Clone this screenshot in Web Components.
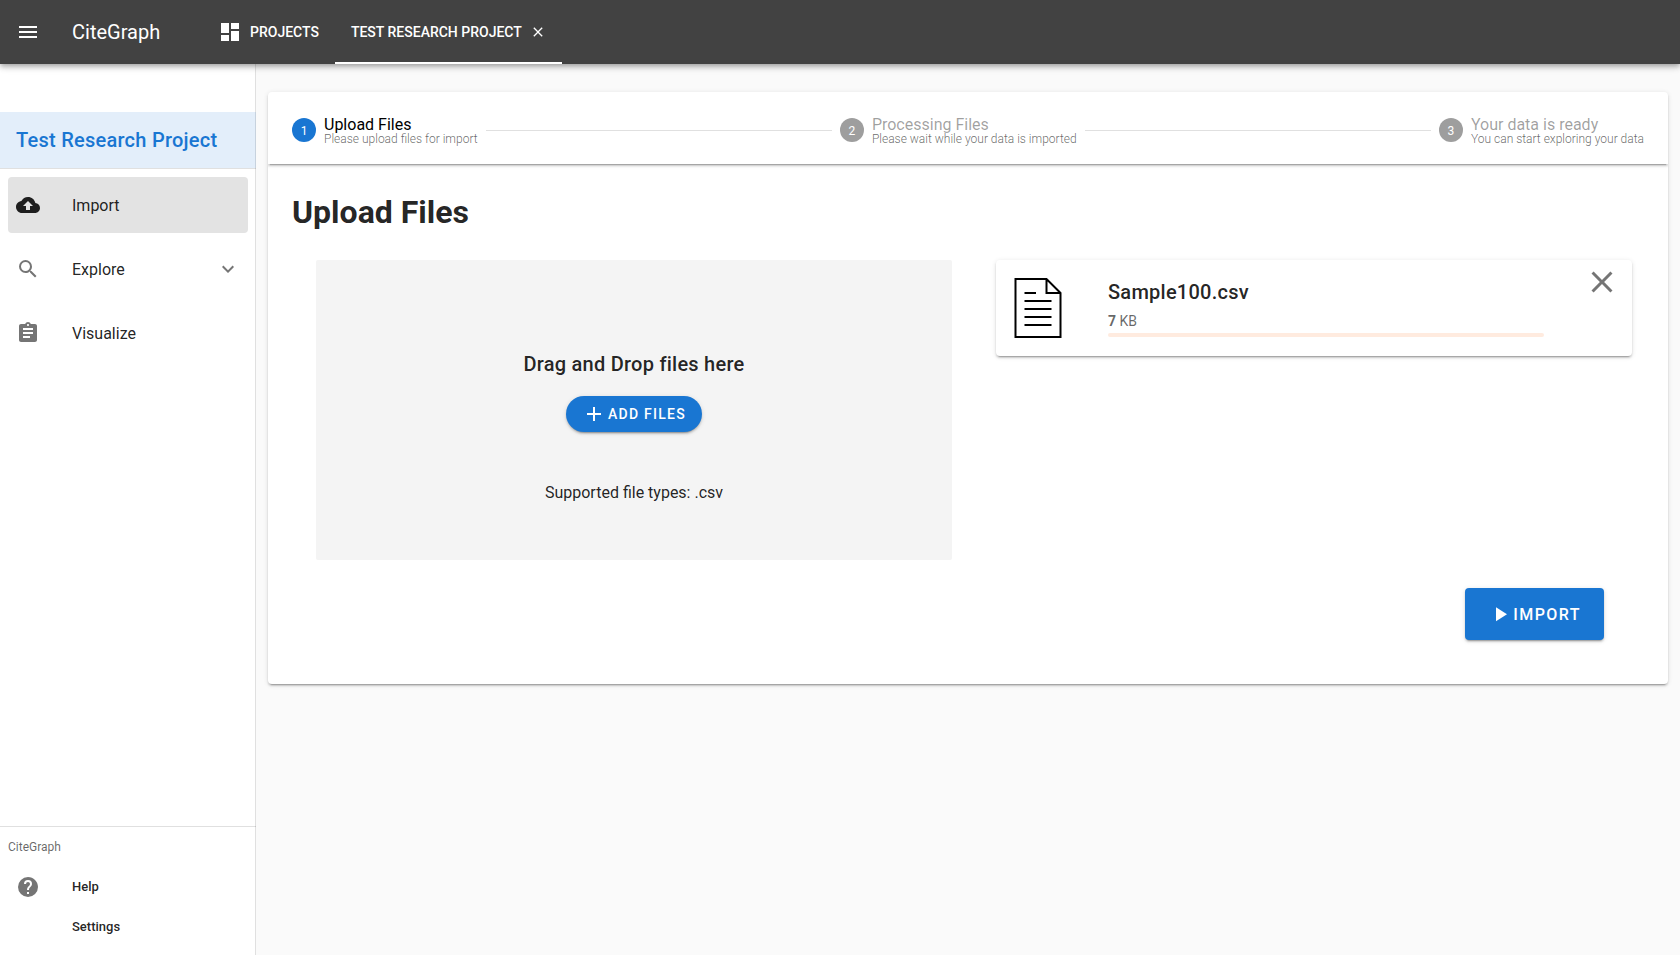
<!DOCTYPE html>
<html lang="en">
<head>
<meta charset="utf-8">
<meta name="viewport" content="width=device-width, initial-scale=1">
<title>CiteGraph</title>
<style>
  body { margin: 0; font-family: Roboto, "Liberation Sans", sans-serif; font-size: 16px; line-height: 24px; color: rgba(0,0,0,.87); background: #fafafa; --primary: #1976d2; --line: rgba(0,0,0,.12);
    --shadow: 0 3px 1px -2px rgba(0,0,0,.2), 0 2px 2px 0 rgba(0,0,0,.14), 0 1px 5px 0 rgba(0,0,0,.12); }
</style>
</head>
<body>
<cg-app>
  <cg-app-bar slot="bar">
    <cg-tab href="#projects" icon="dashboard">Projects</cg-tab>
    <cg-tab href="#project" active closable>Test Research Project</cg-tab>
  </cg-app-bar>
  <cg-sidebar slot="side" heading="Test Research Project">
    <cg-nav-item href="#import" icon="cloud" active>Import</cg-nav-item>
    <cg-nav-item href="#explore" icon="search" expandable>Explore</cg-nav-item>
    <cg-nav-item href="#visualize" icon="clipboard">Visualize</cg-nav-item>
    <cg-nav-item slot="footer" dense href="#help" icon="help">Help</cg-nav-item>
    <cg-nav-item slot="footer" dense href="#settings">Settings</cg-nav-item>
  </cg-sidebar>
  <cg-import-card>
    <cg-step slot="steps" number="1" active>Upload Files<span slot="hint">Please upload files for import</span></cg-step>
    <cg-step slot="steps" number="2">Processing Files<span slot="hint">Please wait while your data is imported</span></cg-step>
    <cg-step slot="steps" number="3" last>Your data is ready<span slot="hint">You can start exploring your data</span></cg-step>
    <cg-dropzone></cg-dropzone>
    <cg-file name="Sample100.csv" size="7"></cg-file>
    <cg-button slot="action" large icon="play">Import</cg-button>
  </cg-import-card>
</cg-app>
<script>
const ICONS = {
  menu: 'M3,6H21V8H3V6M3,11H21V13H3V11M3,16H21V18H3V16Z',
  dashboard: 'M13,3V9H21V3M13,21H21V11H13M3,21H11V15H3M3,13H11V3H3V13Z',
  close: 'M19,6.41L17.59,5L12,10.59L6.41,5L5,6.41L10.59,12L5,17.59L6.41,19L12,13.41L17.59,19L19,17.59L13.41,12L19,6.41Z',
  cloud: 'M19.35 10.04C18.67 6.59 15.64 4 12 4 9.11 4 6.6 5.64 5.35 8.04 2.34 8.36 0 10.91 0 14c0 3.31 2.69 6 6 6h13c2.76 0 5-2.24 5-5 0-2.64-2.05-4.78-4.65-4.96zM14 13v4h-4v-4H7l5-5 5 5h-3z',
  search: 'M9.5,3A6.5,6.5 0 0,1 16,9.5C16,11.11 15.41,12.59 14.44,13.73L14.71,14H15.5L20.5,19L19,20.5L14,15.5V14.71L13.73,14.44C12.59,15.41 11.11,16 9.5,16A6.5,6.5 0 0,1 3,9.5A6.5,6.5 0 0,1 9.5,3M9.5,5C7,5 5,7 5,9.5C5,12 7,14 9.5,14C12,14 14,12 14,9.5C14,7 12,5 9.5,5Z',
  clipboard: 'M19 3h-4.18C14.4 1.84 13.3 1 12 1c-1.3 0-2.4.84-2.82 2H5c-1.1 0-2 .9-2 2v14c0 1.1.9 2 2 2h14c1.1 0 2-.9 2-2V5c0-1.1-.9-2-2-2zm-7 0c.55 0 1 .45 1 1s-.45 1-1 1-1-.45-1-1 .45-1 1-1zm2 14H7v-2h7v2zm3-4H7v-2h10v2zm0-4H7V7h10v2z',
  chevron: 'M7.41,8.58L12,13.17L16.59,8.58L18,10L12,16L6,10L7.41,8.58Z',
  help: 'M15.07,11.25L14.17,12.17C13.45,12.89 13,13.5 13,15H11V14.5C11,13.39 11.45,12.39 12.17,11.67L13.41,10.41C13.78,10.05 14,9.55 14,9C14,7.89 13.1,7 12,7A2,2 0 0,0 10,9H8A4,4 0 0,1 12,5A4,4 0 0,1 16,9C16,9.88 15.64,10.67 15.07,11.25M13,19H11V17H13M12,2A10,10 0 0,0 2,12A10,10 0 0,0 12,22A10,10 0 0,0 22,12C22,6.47 17.5,2 12,2Z',
  plus: 'M19,13H13V19H11V13H5V11H11V5H13V11H19V13Z',
  play: 'M8,5.14V19.14L19,12.14L8,5.14Z'
};

class Base extends HTMLElement {
  connectedCallback() {
    if (this.shadowRoot) return;
    this.attachShadow({ mode: 'open' }).innerHTML = this.render();
  }
}
const define = (name, render) => customElements.define(name, class extends Base { render() { return render(this); } });
const icon = name => `<cg-icon name="${name}"></cg-icon>`;

define('cg-icon', el => `
  <style>
    :host { display: block; flex: none; width: 24px; height: 24px; }
    svg { display: block; width: 100%; height: 100%; fill: currentColor; }
  </style>
  <svg viewBox="0 0 24 24" aria-hidden="true"><path d="${ICONS[el.getAttribute('name')]}"/></svg>`);

define('cg-app', () => `
  <style>
    :host { display: flex; flex-direction: column; min-height: 100vh; }
    .body { flex: 1; display: grid; grid-template-columns: 256px minmax(0, 1fr); }
    main { padding: 28px 12px; }
  </style>
  <slot name="bar"></slot>
  <div class="body"><slot name="side"></slot><main><slot></slot></main></div>`);

define('cg-app-bar', () => `
  <style>
    :host { display: block; position: relative; z-index: 1; }
    header { display: flex; align-items: center; height: 64px; padding: 0 16px; box-sizing: border-box; background: #424242; color: #fff;
      box-shadow: 0 2px 4px -1px rgba(0,0,0,.2), 0 4px 5px 0 rgba(0,0,0,.14), 0 1px 10px 0 rgba(0,0,0,.12); }
    button { padding: 0; border: 0; background: none; color: inherit; }
    .brand { min-width: 130px; margin-left: 32px; font-size: 20px; }
    nav { display: flex; height: 100%; }
  </style>
  <header>
    <button type="button" aria-label="Menu">${icon('menu')}</button>
    <span class="brand">CiteGraph</span>
    <nav><slot></slot></nav>
  </header>`);

define('cg-tab', el => `
  <style>
    :host { display: flex; align-items: center; gap: 8px; padding: 0 16px; border-bottom: 2px solid transparent; border-top: 2px solid transparent; }
    :host([active]) { border-bottom-color: #fff; }
    a { display: flex; align-items: center; gap: 8px; color: inherit; text-decoration: none; text-transform: uppercase; font-size: 14px; font-weight: 500; white-space: nowrap; }
    button { padding: 0; border: 0; background: none; color: inherit; }
    button cg-icon { width: 16px; height: 16px; }
  </style>
  <a href="${el.getAttribute('href')}">${el.hasAttribute('icon') ? icon(el.getAttribute('icon')) : ''}<slot></slot></a>
  ${el.hasAttribute('closable') ? `<button type="button" aria-label="Close tab">${icon('close')}</button>` : ''}`);

define('cg-sidebar', el => `
  <style>
    :host { display: flex; flex-direction: column; background: #fff; box-shadow: inset -1px 0 var(--line); }
    h2 { margin: 48px 0 0; padding: 16px; background: rgba(25,118,210,.12); background-clip: padding-box; color: var(--primary); border-bottom: 1px solid var(--line);
      font-size: 20px; line-height: 24px; font-weight: 500; letter-spacing: .0125em; }
    nav { display: flex; flex-direction: column; gap: 8px; padding: 8px; }
    footer { margin-top: auto; border-top: 1px solid var(--line); padding: 0 8px 8px; }
    p { margin: 0; font-size: 12px; line-height: 40px; color: rgba(0,0,0,.6); }
  </style>
  <h2>${el.getAttribute('heading')}</h2>
  <nav><slot></slot></nav>
  <footer><p>CiteGraph</p><slot name="footer"></slot></footer>`);

define('cg-nav-item', el => `
  <style>
    :host { display: block; }
    a { display: grid; grid-template-columns: 24px 1fr auto; column-gap: 32px; align-items: center; height: 56px; padding: 0 8px; border-radius: 4px; color: inherit; text-decoration: none; }
    cg-icon { color: rgba(0,0,0,.54); }
    .text { grid-column: 2; padding-top: 2px; }
    :host([active]) a { background: #e3e3e3; }
    :host([active]) cg-icon { color: inherit; }
    :host([dense]) a { height: 40px; font-size: 13px; font-weight: 500; }
    :host([dense]) .text { padding-top: 0; }
  </style>
  <a href="${el.getAttribute('href')}">${el.hasAttribute('icon') ? icon(el.getAttribute('icon')) : ''}<span class="text"><slot></slot></span>${el.hasAttribute('expandable') ? icon('chevron') : ''}</a>`);

define('cg-import-card', () => `
  <style>
    :host { display: block; background: #fff; border-radius: 4px; overflow: hidden; box-shadow: var(--shadow); }
    .steps { display: flex; height: 68px; padding: 4px 24px 0; gap: 8px; align-items: center; box-shadow: var(--shadow); }
    h1 { margin: 24px; font-size: 32px; line-height: 48px; font-weight: 700; }
    .grid { display: grid; grid-template-columns: 1fr 1fr; column-gap: 44px; align-items: start; padding: 0 36px 0 48px; }
    .actions { display: flex; justify-content: flex-end; padding: 28px 64px 44px; }
  </style>
  <div class="steps"><slot name="steps"></slot></div>
  <h1>Upload Files</h1>
  <div class="grid"><slot></slot></div>
  <div class="actions"><slot name="action"></slot></div>`);

define('cg-step', el => `
  <style>
    :host { display: flex; align-items: center; gap: 8px; flex: 1 1 auto; color: rgba(0,0,0,.38); }
    :host([last]) { flex: none; }
    :host([last]) .rule { display: none; }
    .dot { flex: none; width: 24px; height: 24px; line-height: 26px; border-radius: 50%; background: #9e9e9e; color: #fff; font-size: 12px; text-align: center; }
    .label { padding-top: 2px; font-size: 16px; line-height: 16px; white-space: nowrap; }
    .hint { font-size: 12px; line-height: 12px; font-weight: 300; color: rgba(0,0,0,.6); }
    .rule { flex: 1; height: 1px; background: var(--line); }
    :host([active]) .label { color: #000; }
    :host([active]) .dot { background: var(--primary); }
  </style>
  <span class="dot">${el.getAttribute('number')}</span>
  <div class="label"><slot></slot><div class="hint"><slot name="hint"></slot></div></div>
  <span class="rule"></span>`);

define('cg-dropzone', () => `
  <style>
    :host { display: flex; flex-direction: column; align-items: center; height: 300px; box-sizing: border-box; padding-top: 88px; background: #f4f4f4; border-radius: 2px; }
    h3 { margin: 0 0 16px; font-size: 20px; line-height: 32px; font-weight: 500; letter-spacing: .0125em; }
    p { margin: 48px 0 0; line-height: 26px; }
  </style>
  <h3>Drag and Drop files here</h3>
  <cg-button rounded icon="plus">Add files</cg-button>
  <p>Supported file types: .csv</p>`);

define('cg-button', el => `
  <style>
    :host { display: block; }
    button { display: flex; align-items: center; gap: 2px; height: 36px; padding: 0 16px; border: 0; border-radius: 4px; background: var(--primary); color: #fff; box-shadow: var(--shadow);
      font: 500 14px Roboto, "Liberation Sans", sans-serif; letter-spacing: .09em; text-transform: uppercase; }
    :host([rounded]) button { border-radius: 18px; }
    :host([large]) button { gap: 1px; height: 52px; padding: 0 23px; font-size: 16px; }
  </style>
  <button type="button">${icon(el.getAttribute('icon'))}<slot></slot></button>`);

define('cg-file', el => `
  <style>
    :host { display: grid; grid-template-columns: 48px minmax(0, 1fr) 36px; min-height: 96px; box-sizing: border-box; padding: 0 12px 0 18px; background: #fff; border-radius: 4px; box-shadow: var(--shadow); }
    .page { width: 48px; height: 60px; margin-top: 18px; fill: none; stroke: #000; stroke-width: 2; }
    .info { padding: 16px 40px 0 46px; }
    h3 { margin: 0; font-size: 20px; line-height: 32px; font-weight: 500; letter-spacing: .0125em; }
    label { display: block; padding-top: 1px; font-size: 14px; line-height: 24px; color: rgba(0,0,0,.6); }
    progress { display: block; appearance: none; width: 100%; height: 4px; border: 0; border-radius: 2px; overflow: hidden; background: #ffebdf; }
    progress::-webkit-progress-bar { background: #ffebdf; }
    progress::-webkit-progress-value { background: #ff9b61; }
    button { align-self: start; margin-top: 4px; padding: 0; border: 0; background: none; color: rgba(0,0,0,.54); }
    button cg-icon { width: 36px; height: 36px; }
  </style>
  <svg class="page" viewBox="0 0 48 60" aria-hidden="true"><path d="M1.500 1H32.500L46.500 15V59H1.500ZM32.500 1V15H46.500M10.500 15H22M10.500 23H37.500M10.500 31H37.500M10.500 39H37.500M10.500 47H37.500"/></svg>
  <div class="info">
    <h3>${el.getAttribute('name')}</h3>
    <label for="progress"><b>${el.getAttribute('size')}</b> KB</label>
    <progress id="progress" max="100" value="0"></progress>
  </div>
  <button type="button" aria-label="Remove file">${icon('close')}</button>`);
</script>
</body>
</html>
